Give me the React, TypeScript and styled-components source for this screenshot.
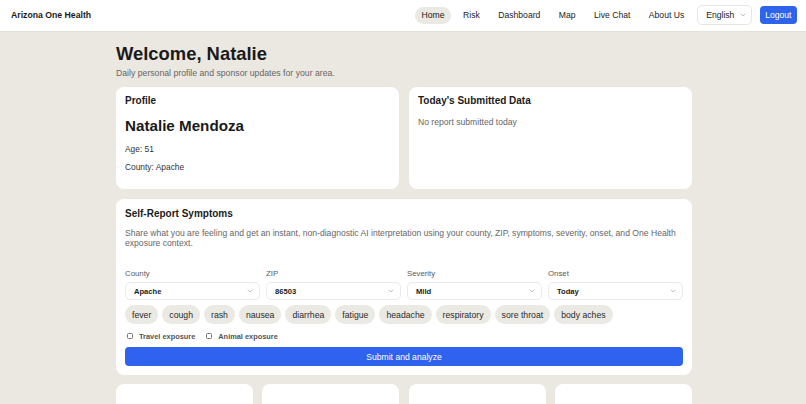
import styled, { createGlobalStyle } from 'styled-components'
import { ChevronDown } from 'lucide-react'

const GlobalStyle = createGlobalStyle`
  html, body {
    margin: 0;
    padding: 0;
    overflow: hidden;
    background: #ebe8e1;
    font-family: "Liberation Sans", Arial, sans-serif;
    color: #1d1d1d;
  }
  * {
    box-sizing: border-box;
  }
`

const Header = styled.header`
  height: 32px;
  background: #ffffff;
  border-bottom: 1px solid #e4e1da;
  display: flex;
  align-items: center;
  justify-content: space-between;
  padding: 0 9px 1px 11px;
`

const Brand = styled.div`
  font-size: 8.7px;
  font-weight: 700;
  color: #1b1b1b;
`

const Nav = styled.nav`
  display: flex;
  align-items: center;
  gap: 5.5px;
`

const NavLink = styled.a<{ $active?: boolean }>`
  height: 17px;
  padding: 0 6.5px;
  display: flex;
  align-items: center;
  border-radius: 9px;
  font-size: 8.6px;
  color: #222;
  background: ${(p) => (p.$active ? '#ebe9e4' : 'transparent')};
  cursor: pointer;
`

const LangSelect = styled.div`
  width: 55px;
  height: 20px;
  margin-left: 1px;
  display: flex;
  align-items: center;
  justify-content: space-between;
  padding: 0 4px 0 8px;
  border: 1px solid #e8e6e1;
  border-radius: 5px;
  font-size: 8.6px;
  color: #222;
  background: #fff;
`

const LogoutButton = styled.button`
  height: 18px;
  margin-left: 2px;
  padding: 0 5.5px;
  border: none;
  border-radius: 4px;
  background: #2e63ec;
  color: #fff;
  font-family: inherit;
  font-size: 8.6px;
`

const Main = styled.main`
  width: 576px;
  margin-left: calc(50% - 287px);
  padding-top: 11px;
`

const Title = styled.h1`
  margin: 0;
  font-size: 18.4px;
  line-height: 22px;
  font-weight: 700;
  color: #1a1a1a;
`

const Subtitle = styled.p`
  margin: 3px 0 0;
  font-size: 8.7px;
  line-height: 11px;
  color: #666;
`

const TopRow = styled.div`
  display: grid;
  grid-template-columns: 1fr 1fr;
  gap: 10px;
  margin-top: 8px;
`

const Card = styled.section`
  background: #fff;
  border-radius: 8px;
  padding: 8px 9px 9px;
`

const ProfileCard = styled(Card)`
  height: 102px;
`

const CardTitle = styled.h2`
  margin: 0;
  font-size: 10px;
  line-height: 12px;
  font-weight: 700;
  color: #1b1b1b;
`

const Name = styled.div`
  margin-top: 10px;
  font-size: 15.2px;
  line-height: 18px;
  font-weight: 700;
  color: #1a1a1a;
`

const Meta = styled.div`
  margin-top: 8.5px;
  font-size: 8.4px;
  line-height: 10px;
  color: #333;
`

const Muted = styled.div`
  margin-top: 10px;
  font-size: 8.6px;
  line-height: 10px;
  color: #666;
`

const ReportCard = styled(Card)`
  margin-top: 10px;
  padding-top: 9px;
`

const Description = styled.p`
  margin: 8px 0 0;
  font-size: 8.6px;
  line-height: 10px;
  color: #666;
`

const FieldGrid = styled.div`
  display: grid;
  grid-template-columns: repeat(4, 1fr);
  gap: 6px;
  margin-top: 21px;
`

const FieldGroup = styled.div`
  display: flex;
  flex-direction: column;
  gap: 4px;
`

const FieldLabel = styled.label`
  font-size: 7.8px;
  line-height: 9px;
  color: #5a5a5a;
`

const SelectBox = styled.div`
  height: 18px;
  display: flex;
  align-items: center;
  justify-content: space-between;
  padding: 0 5px 0 8px;
  border: 1px solid #ecebe8;
  border-radius: 5px;
  background: #fff;
  font-size: 7.6px;
  font-weight: 700;
  color: #222;
`

const Chips = styled.div`
  display: flex;
  flex-wrap: wrap;
  gap: 4px;
  margin-top: 5px;
`

const Chip = styled.button`
  height: 19px;
  padding: 0 7px;
  border: none;
  border-radius: 10px;
  background: #ebe9e4;
  font-family: inherit;
  font-size: 8.7px;
  color: #2b2b2b;
`

const CheckRow = styled.div`
  display: flex;
  align-items: center;
  gap: 11px;
  margin-top: 7px;
  padding-left: 2px;
  height: 10px;
`

const CheckLabel = styled.label`
  display: flex;
  align-items: center;
  gap: 6px;
  font-size: 7.4px;
  font-weight: 700;
  color: #555;
`

const CheckBox = styled.span`
  width: 6px;
  height: 6px;
  border: 1px solid #777;
  border-radius: 1.5px;
  background: #fff;
`

const SubmitButton = styled.button`
  width: 100%;
  height: 19px;
  margin-top: 6px;
  border: none;
  border-radius: 4px;
  background: #2f62ef;
  color: #fff;
  font-family: inherit;
  font-size: 8.6px;
`

const BottomRow = styled.div`
  display: grid;
  grid-template-columns: repeat(4, 1fr);
  gap: 9.5px;
  margin-top: 9px;
`

const StubCard = styled(Card)`
  height: 80px;
`

const navItems = ['Home', 'Risk', 'Dashboard', 'Map', 'Live Chat', 'About Us']
const fields = [
  { label: 'County', value: 'Apache' },
  { label: 'ZIP', value: '86503' },
  { label: 'Severity', value: 'Mild' },
  { label: 'Onset', value: 'Today' },
]
const symptoms = [
  'fever',
  'cough',
  'rash',
  'nausea',
  'diarrhea',
  'fatigue',
  'headache',
  'respiratory',
  'sore throat',
  'body aches',
]

export default function App() {
  return (
    <>
      <GlobalStyle />
      <Header>
        <Brand>Arizona One Health</Brand>
        <Nav>
          {navItems.map((item) => (
            <NavLink key={item} $active={item === 'Home'}>
              {item}
            </NavLink>
          ))}
          <LangSelect>
            <span>English</span>
            <ChevronDown size={8} strokeWidth={1.6} color="#8a8a8a" />
          </LangSelect>
          <LogoutButton>Logout</LogoutButton>
        </Nav>
      </Header>

      <Main>
        <Title>Welcome, Natalie</Title>
        <Subtitle>Daily personal profile and sponsor updates for your area.</Subtitle>

        <TopRow>
          <ProfileCard>
            <CardTitle>Profile</CardTitle>
            <Name>Natalie Mendoza</Name>
            <Meta>Age: 51</Meta>
            <Meta>County: Apache</Meta>
          </ProfileCard>
          <ProfileCard>
            <CardTitle>Today&apos;s Submitted Data</CardTitle>
            <Muted>No report submitted today</Muted>
          </ProfileCard>
        </TopRow>

        <ReportCard>
          <CardTitle>Self-Report Symptoms</CardTitle>
          <Description>
            Share what you are feeling and get an instant, non-diagnostic AI interpretation using your
            county, ZIP, symptoms, severity, onset, and One Health exposure context.
          </Description>
          <FieldGrid>
            {fields.map((f) => (
              <FieldGroup key={f.label}>
                <FieldLabel>{f.label}</FieldLabel>
                <SelectBox>
                  <span>{f.value}</span>
                  <ChevronDown size={8} strokeWidth={1.6} color="#8a8a8a" />
                </SelectBox>
              </FieldGroup>
            ))}
          </FieldGrid>
          <Chips>
            {symptoms.map((s) => (
              <Chip key={s}>{s}</Chip>
            ))}
          </Chips>
          <CheckRow>
            <CheckLabel>
              <CheckBox />
              Travel exposure
            </CheckLabel>
            <CheckLabel>
              <CheckBox />
              Animal exposure
            </CheckLabel>
          </CheckRow>
          <SubmitButton>Submit and analyze</SubmitButton>
        </ReportCard>

        <BottomRow>
          <StubCard />
          <StubCard />
          <StubCard />
          <StubCard />
        </BottomRow>
      </Main>
    </>
  )
}
